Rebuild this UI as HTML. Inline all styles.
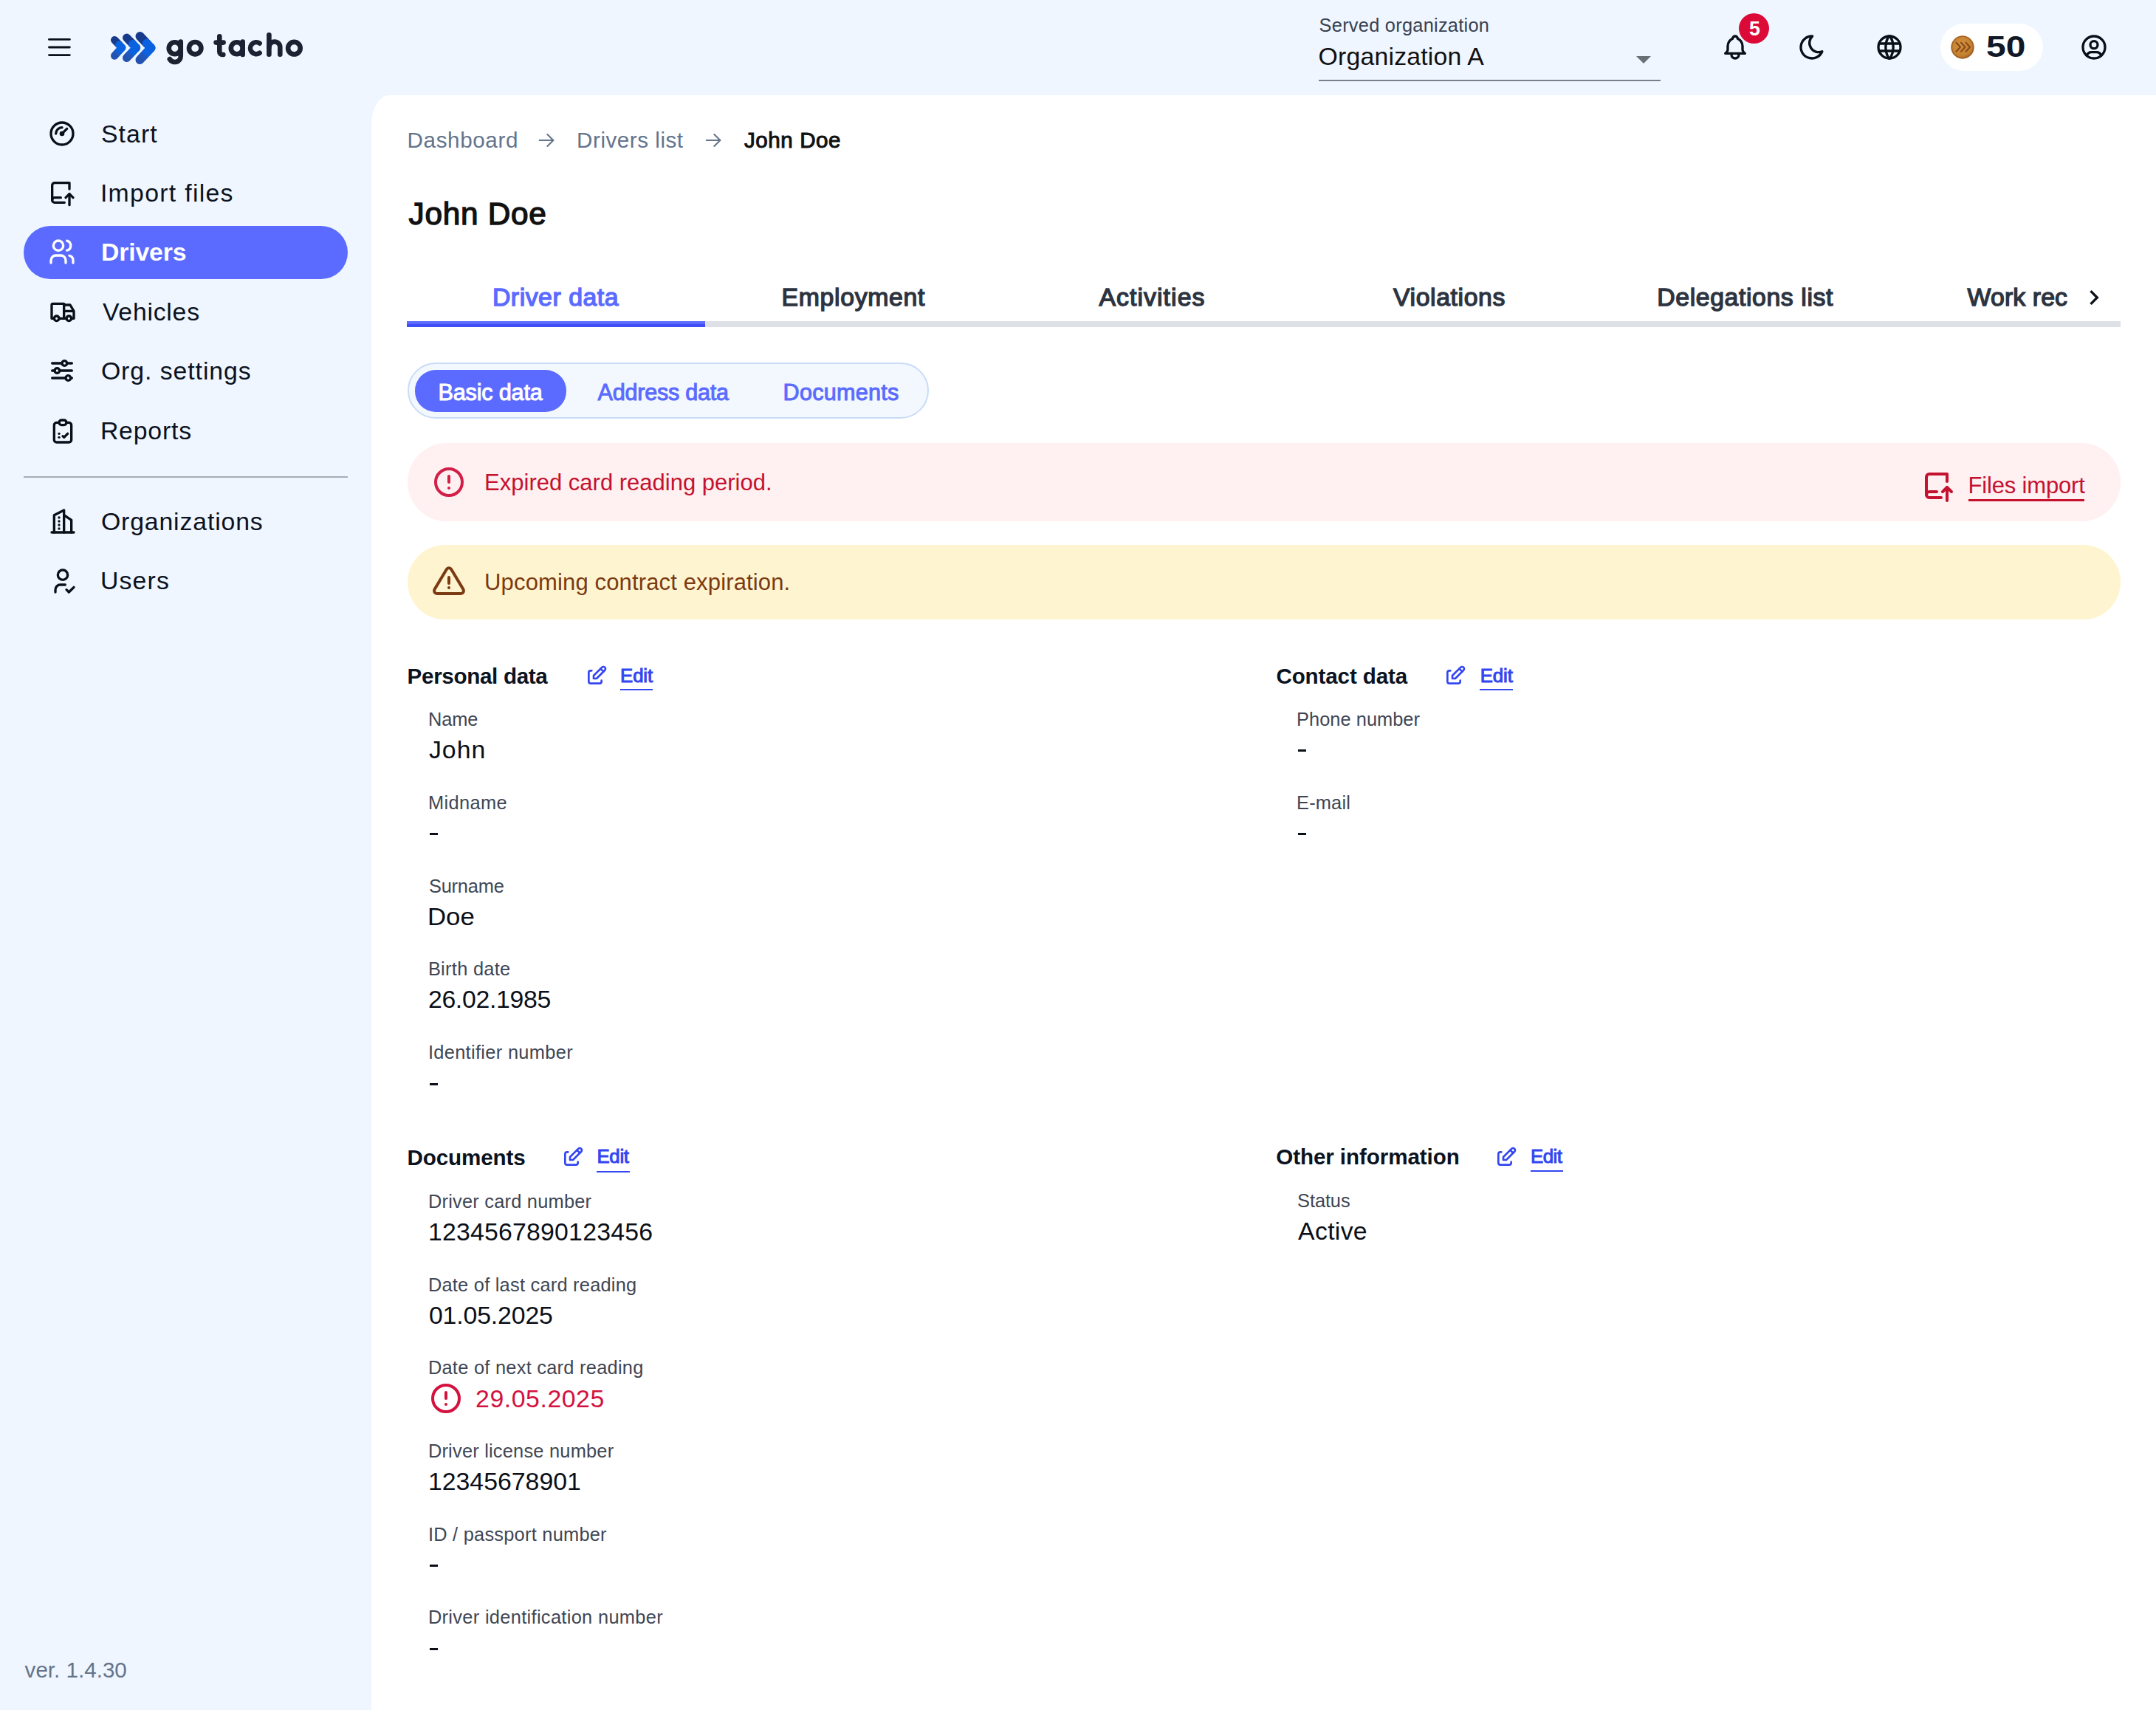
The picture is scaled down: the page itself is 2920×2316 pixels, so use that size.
<!DOCTYPE html>
<html lang="en">
<head>
<meta charset="utf-8">
<title>go tacho - John Doe</title>
<style>
html,body{margin:0;padding:0;}
body{width:2920px;height:2316px;overflow:hidden;position:relative;background:#eff6ff;font-family:"Liberation Sans",sans-serif;}
.t{position:absolute;white-space:nowrap;}
.abs{position:absolute;}
svg.ic{position:absolute;overflow:visible;}
svg.ic path, svg.ic circle{fill:none;stroke-linecap:round;stroke-linejoin:round;}
@media (-webkit-min-device-pixel-ratio:1.5) and (max-width:2000px){html{zoom:0.5;}}
</style>
</head>
<body>
<!-- main card -->
<div class="abs" style="left:503px;top:129px;width:2417px;height:2187px;background:#ffffff;border-top-left-radius:24px 40px;"></div>

<!-- header: hamburger -->
<svg class="ic" style="left:0;top:0" width="500" height="129" viewBox="0 0 500 129">
  <g stroke="#0b0f17" stroke-width="2.9" stroke-linecap="round" fill="none">
    <path d="M66.5 53.4H94.3"/><path d="M66.5 64H94.3"/><path d="M66.5 74.6H94.3"/>
  </g>
  <!-- chevrons -->
  <defs>
    <linearGradient id="lg0" gradientUnits="userSpaceOnUse" x1="165.2" y1="64.6" x2="155.2" y2="75.6"><stop offset="0" stop-color="#0b62e0"/><stop offset="0.45" stop-color="#0b62e0"/><stop offset="0.7" stop-color="#2256bb"/><stop offset="1" stop-color="#2353b0"/></linearGradient>
    <linearGradient id="lg1" gradientUnits="userSpaceOnUse" x1="184.6" y1="64.6" x2="171.6" y2="78.4"><stop offset="0" stop-color="#0b62e0"/><stop offset="0.45" stop-color="#0b62e0"/><stop offset="0.7" stop-color="#2256bb"/><stop offset="1" stop-color="#2353b0"/></linearGradient>
    <linearGradient id="lg2" gradientUnits="userSpaceOnUse" x1="204.5" y1="64.8" x2="189.5" y2="81.0"><stop offset="0" stop-color="#0b62e0"/><stop offset="0.45" stop-color="#0b62e0"/><stop offset="0.7" stop-color="#2256bb"/><stop offset="1" stop-color="#2353b0"/></linearGradient>
  </defs>
  <g fill="none" stroke-linecap="round" stroke-linejoin="round">
    <path d="M155.2 54.2L161.40 60.65" stroke="#163a8c" stroke-width="10.4"/>
    <path d="M165.2 64.6L155.2 75.6" stroke="url(#lg0)" stroke-width="10.4"/>
    <path d="M161.40 60.65L165.2 64.6" stroke="#0b62e0" stroke-width="10.4"/>
    <path d="M171.6 51.2L179.66 59.51" stroke="#163a8c" stroke-width="11.2"/>
    <path d="M184.6 64.6L171.6 78.4" stroke="url(#lg1)" stroke-width="11.2"/>
    <path d="M179.66 59.51L184.6 64.6" stroke="#0b62e0" stroke-width="11.2"/>
    <path d="M189.5 49.0L198.80 58.80" stroke="#163a8c" stroke-width="12.0"/>
    <path d="M204.5 64.8L189.5 81.0" stroke="url(#lg2)" stroke-width="12.0"/>
    <path d="M198.80 58.80L204.5 64.8" stroke="#0b62e0" stroke-width="12.0"/>
  </g>
  <!-- go tacho -->
  <g fill="none" stroke="#1b2231" stroke-width="6.6" stroke-linecap="round" stroke-linejoin="round">
    <circle cx="236.75" cy="65.2" r="8"/>
    <path d="M244.75 56.5V76A8 8 0 0 1 229.8 80"/>
    <circle cx="264.2" cy="65.2" r="8.2"/>
    <path d="M297.3 49.3V70A4 4 0 0 0 301.3 74H302.3"/>
    <path d="M292.6 57.6H302.6"/>
    <circle cx="320.8" cy="65.2" r="8"/>
    <path d="M328.7 56.5V74"/>
    <path d="M351.6 58.65A8 8 0 1 0 351.6 71.75"/>
    <path d="M364.4 47.3V73.8"/>
    <path d="M364.4 63.9A7.45 7.45 0 0 1 379.3 63.9V73.8"/>
    <circle cx="398.4" cy="65.2" r="8.3"/>
  </g>
</svg>

<!-- select -->
<div class="abs" style="left:1786px;top:108px;width:463px;height:2px;background:#7b7f86;"></div>
<svg class="ic" style="left:2201.5px;top:56px" width="48" height="48" viewBox="0 0 24 24"><path d="M7 10l5 5 5-5z" style="fill:#6b6f76;stroke:none"/></svg>

<!-- header icons -->
<svg class="ic" style="left:2330px;top:44px" width="40" height="40" viewBox="0 0 24 24" stroke="#0b0f17" stroke-width="2"><path d="M10 5a2 2 0 1 1 4 0a7 7 0 0 1 4 6v3a4 4 0 0 0 2 3h-16a4 4 0 0 0 2 -3v-3a7 7 0 0 1 4 -6"/><path d="M9 17v1a3 3 0 0 0 6 0v-1"/></svg>
<div class="abs" style="left:2354.8px;top:17.9px;width:41px;height:41px;border-radius:50%;background:#dc0a37;"></div>
<svg class="ic" style="left:2434px;top:44px" width="40" height="40" viewBox="0 0 24 24" stroke="#0b0f17" stroke-width="2"><path d="M12 3c.132 0 .263 0 .393 0a7.5 7.5 0 0 0 7.92 12.446a9 9 0 1 1 -8.313 -12.454z"/></svg>
<svg class="ic" style="left:2539px;top:44px" width="40" height="40" viewBox="0 0 24 24" stroke="#0b0f17" stroke-width="2"><path d="M3 12a9 9 0 1 0 18 0a9 9 0 0 0 -18 0"/><path d="M3.6 9h16.8"/><path d="M3.6 15h16.8"/><path d="M11.5 3a17 17 0 0 0 0 18"/><path d="M12.5 3a17 17 0 0 1 0 18"/></svg>
<div class="abs" style="left:2628px;top:32px;width:139px;height:64px;border-radius:32px;background:#ffffff;"></div>
<svg class="ic" style="left:2642px;top:47.5px" width="32" height="32" viewBox="0 0 32 32">
  <defs><radialGradient id="cg" cx="0.45" cy="0.4" r="0.65"><stop offset="0" stop-color="#d4923e"/><stop offset="0.7" stop-color="#c4822f"/><stop offset="1" stop-color="#9c5a22"/></radialGradient></defs>
  <circle cx="16" cy="16" r="15.7" style="fill:url(#cg);stroke:none"/><circle cx="16" cy="16" r="14.6" style="fill:none" stroke="#a0602a" stroke-width="1.4"/>
  <g style="fill:none" stroke="#8a4a1c" stroke-width="2.2" stroke-linecap="round">
    <path d="M7.5 9.7l5.5 6l-5.5 6"/><path d="M14 9.7l5.5 6l-5.5 6"/><path d="M20.5 9.7l5.5 6l-5.5 6"/>
  </g>
</svg>
<svg class="ic" style="left:2815.7px;top:44px" width="40" height="40" viewBox="0 0 24 24" stroke="#0b0f17" stroke-width="2"><path d="M12 12m-9 0a9 9 0 1 0 18 0a9 9 0 1 0 -18 0"/><path d="M12 10m-3 0a3 3 0 1 0 6 0a3 3 0 1 0 -6 0"/><path d="M6.168 18.849a4 4 0 0 1 3.832 -2.849h4a4 4 0 0 1 3.834 2.855"/></svg>

<!-- sidebar -->
<div class="abs" style="left:32px;top:306px;width:439px;height:72px;border-radius:36px;background:#5b6bff;"></div>
<div class="abs" style="left:32px;top:644.5px;width:439px;height:2px;background:#a9adb4;"></div>
<!-- nav icons (40px boxes) -->
<svg class="ic" style="left:64.2px;top:160.7px" width="40" height="40" viewBox="0 0 24 24" stroke="#0b0f17" stroke-width="2"><path d="M12 12m-9 0a9 9 0 1 0 18 0a9 9 0 1 0 -18 0"/><path d="M11 12a1 1 0 1 0 2 0a1 1 0 1 0 -2 0" style="fill:#0b0f17"/><path d="M13.41 10.59l2.59 -2.59"/><path d="M7 12a5 5 0 0 1 5 -5"/></svg>
<svg class="ic" style="left:64.2px;top:241px" width="40" height="40" viewBox="0 0 24 24" stroke="#0b0f17" stroke-width="2"><path d="M14 20h-8a2 2 0 0 1 -2 -2v-12a2 2 0 0 1 2 -2h12v5"/><path d="M11 16h-5a2 2 0 0 0 -2 2"/><path d="M15 16l3 -3l3 3"/><path d="M18 13v9"/></svg>
<svg class="ic" style="left:64.2px;top:321.3px" width="40" height="40" viewBox="0 0 24 24" stroke="#ffffff" stroke-width="2"><path d="M9 7m-4 0a4 4 0 1 0 8 0a4 4 0 1 0 -8 0"/><path d="M3 21v-2a4 4 0 0 1 4 -4h4a4 4 0 0 1 4 4v2"/><path d="M16 3.13a4 4 0 0 1 0 7.75"/><path d="M21 21v-2a4 4 0 0 0 -3 -3.85"/></svg>
<svg class="ic" style="left:64.7px;top:402.6px" width="40" height="40" viewBox="0 0 24 24" stroke="#0b0f17" stroke-width="2"><path d="M7 17m-2 0a2 2 0 1 0 4 0a2 2 0 1 0 -4 0"/><path d="M17 17m-2 0a2 2 0 1 0 4 0a2 2 0 1 0 -4 0"/><path d="M5 17h-2v-11a1 1 0 0 1 1 -1h9v12m-4 0h6m4 0h2v-6h-8m0 -5h5l3 5"/></svg>
<svg class="ic" style="left:64.2px;top:481.9px" width="40" height="40" viewBox="0 0 24 24" stroke="#0b0f17" stroke-width="2"><path d="M14 6m-2 0a2 2 0 1 0 4 0a2 2 0 1 0 -4 0"/><path d="M4 6l8 0"/><path d="M16 6l4 0"/><path d="M8 12m-2 0a2 2 0 1 0 4 0a2 2 0 1 0 -4 0"/><path d="M4 12l2 0"/><path d="M10 12l10 0"/><path d="M17 18m-2 0a2 2 0 1 0 4 0a2 2 0 1 0 -4 0"/><path d="M4 18l11 0"/><path d="M19 18l1 0"/></svg>
<svg class="ic" style="left:64.7px;top:563.7px" width="40" height="40" viewBox="0 0 24 24" stroke="#0b0f17" stroke-width="2"><path d="M9 5h-2a2 2 0 0 0 -2 2v12a2 2 0 0 0 2 2h10a2 2 0 0 0 2 -2v-12a2 2 0 0 0 -2 -2h-2"/><path d="M9 3m0 2a2 2 0 0 1 2 -2h2a2 2 0 0 1 2 2v0a2 2 0 0 1 -2 2h-2a2 2 0 0 1 -2 -2z"/><path d="M9 14h.01"/><path d="M9 17h.01"/><path d="M12 16l1 1l3 -3"/></svg>
<svg class="ic" style="left:64.8px;top:686.3px" width="40" height="40" viewBox="0 0 24 24" stroke="#0b0f17" stroke-width="2"><path d="M3 21l18 0"/><path d="M5 21v-14l8 -4v18"/><path d="M19 21v-10l-6 -4"/><path d="M9 9l0 .01"/><path d="M9 12l0 .01"/><path d="M9 15l0 .01"/><path d="M9 18l0 .01"/></svg>
<svg class="ic" style="left:64.5px;top:766.8px" width="40" height="40" viewBox="0 0 24 24" stroke="#0b0f17" stroke-width="2"><path d="M8 7a4 4 0 1 0 8 0a4 4 0 0 0 -8 0"/><path d="M6 21v-2a4 4 0 0 1 4 -4h4"/><path d="M15 19l2 2l4 -4"/></svg>

<!-- breadcrumb arrows -->
<svg class="ic" style="left:724.1px;top:173.7px" width="32" height="32" viewBox="0 0 24 24" stroke="#64748b" stroke-width="1.5"><path d="M5 12l14 0"/><path d="M13 18l6 -6"/><path d="M13 6l6 6"/></svg>
<svg class="ic" style="left:950.3px;top:173.7px" width="32" height="32" viewBox="0 0 24 24" stroke="#64748b" stroke-width="1.5"><path d="M5 12l14 0"/><path d="M13 18l6 -6"/><path d="M13 6l6 6"/></svg>

<!-- tabs -->
<div class="abs" style="left:551px;top:435px;width:2320.6px;height:8px;background:#dde1e6;"></div>
<div class="abs" style="left:551px;top:435px;width:404px;height:8px;background:linear-gradient(#5c6afd 0,#5c6afd 50%,#3d4ff5 50%,#3d4ff5 100%);"></div>
<svg class="ic" style="left:2815.7px;top:382.7px" width="40" height="40" viewBox="0 0 24 24"><path d="M8.59 16.59 13.17 12 8.59 7.41 10 6l6 6-6 6z" style="fill:#0b0f17;stroke:none"/></svg>

<!-- segmented control -->
<div class="abs" style="left:552px;top:491.3px;width:702px;height:72px;border:2px solid #c9dcf6;border-radius:38px;background:#f3f8fe;"></div>
<div class="abs" style="left:561.6px;top:501.3px;width:205.4px;height:56.5px;border-radius:28px;background:#5b6bff;"></div>

<!-- alerts -->
<div class="abs" style="left:551.75px;top:600px;width:2319.85px;height:106px;border-radius:53px;background:#fff0f1;"></div>
<svg class="ic" style="left:584px;top:629.25px" width="48" height="48" viewBox="0 0 24 24" stroke="#d21f47" stroke-width="2"><path d="M3 12a9 9 0 1 0 18 0a9 9 0 0 0 -18 0"/><path d="M12 8v4"/><path d="M12 16h.01"/></svg>
<svg class="ic" style="left:2601px;top:633.5px" width="48" height="48" viewBox="0 0 24 24" stroke="#c4122f" stroke-width="2"><path d="M14 20h-8a2 2 0 0 1 -2 -2v-12a2 2 0 0 1 2 -2h12v5"/><path d="M11 16h-5a2 2 0 0 0 -2 2"/><path d="M15 16l3 -3l3 3"/><path d="M18 13v9"/></svg>
<div class="abs" style="left:2665.7px;top:676px;width:157.7px;height:2.6px;background:#c4122f;"></div>
<div class="abs" style="left:551.75px;top:738px;width:2319.85px;height:101px;border-radius:50.5px;background:#fff4d0;"></div>
<svg class="ic" style="left:584px;top:763.7px" width="48" height="48" viewBox="0 0 24 24" stroke="#7a3a12" stroke-width="2"><path d="M12 9v4"/><path d="M10.363 3.591l-8.106 13.534a1.914 1.914 0 0 0 1.636 2.871h16.214a1.914 1.914 0 0 0 1.636 -2.87l-8.106 -13.536a1.914 1.914 0 0 0 -3.274 0z"/><path d="M12 16h.01"/></svg>

<!-- edit icons + underlines -->
<svg class="ic" style="left:791.5px;top:898.7px" width="32" height="32" viewBox="0 0 24 24" stroke="#3346f0" stroke-width="2"><path d="M7 7h-1a2 2 0 0 0 -2 2v9a2 2 0 0 0 2 2h9a2 2 0 0 0 2 -2v-1"/><path d="M20.385 6.585a2.1 2.1 0 0 0 -2.97 -2.97l-8.415 8.385v3h3l8.385 -8.415z"/><path d="M16 5l3 3"/></svg>
<div class="abs" style="left:839.7px;top:933px;width:44.6px;height:2.2px;background:#3346f0;"></div>
<svg class="ic" style="left:1955.4px;top:898.7px" width="32" height="32" viewBox="0 0 24 24" stroke="#3346f0" stroke-width="2"><path d="M7 7h-1a2 2 0 0 0 -2 2v9a2 2 0 0 0 2 2h9a2 2 0 0 0 2 -2v-1"/><path d="M20.385 6.585a2.1 2.1 0 0 0 -2.97 -2.97l-8.415 8.385v3h3l8.385 -8.415z"/><path d="M16 5l3 3"/></svg>
<div class="abs" style="left:2004px;top:933px;width:44.8px;height:2.2px;background:#3346f0;"></div>
<svg class="ic" style="left:759.7px;top:1550.7px" width="32" height="32" viewBox="0 0 24 24" stroke="#3346f0" stroke-width="2"><path d="M7 7h-1a2 2 0 0 0 -2 2v9a2 2 0 0 0 2 2h9a2 2 0 0 0 2 -2v-1"/><path d="M20.385 6.585a2.1 2.1 0 0 0 -2.97 -2.97l-8.415 8.385v3h3l8.385 -8.415z"/><path d="M16 5l3 3"/></svg>
<div class="abs" style="left:808.2px;top:1585.8px;width:44.6px;height:2.2px;background:#3346f0;"></div>
<svg class="ic" style="left:2023.6px;top:1550.7px" width="32" height="32" viewBox="0 0 24 24" stroke="#3346f0" stroke-width="2"><path d="M7 7h-1a2 2 0 0 0 -2 2v9a2 2 0 0 0 2 2h9a2 2 0 0 0 2 -2v-1"/><path d="M20.385 6.585a2.1 2.1 0 0 0 -2.97 -2.97l-8.415 8.385v3h3l8.385 -8.415z"/><path d="M16 5l3 3"/></svg>
<div class="abs" style="left:2072.5px;top:1585.3px;width:44.8px;height:2.2px;background:#3346f0;"></div>

<!-- next card reading icon -->
<svg class="ic" style="left:579.9px;top:1870.4px" width="48" height="48" viewBox="0 0 24 24" stroke="#d3123f" stroke-width="2"><path d="M3 12a9 9 0 1 0 18 0a9 9 0 0 0 -18 0"/><path d="M12 8v4"/><path d="M12 16h.01"/></svg>

<div class="t" style="left:1786.60px;top:21.79px;font-size:25.4px;line-height:25.4px;color:#374151;letter-spacing:0.250px;">Served organization</div>
<div class="t" style="left:1785.60px;top:59.67px;font-size:33.8px;line-height:33.8px;color:#111111;letter-spacing:0.192px;">Organization A</div>
<div class="t" style="left:2368.90px;top:24.68px;font-size:27.3px;line-height:27.3px;color:#ffffff;font-weight:700;transform:scaleX(0.9829);transform-origin:0 0;">5</div>
<div class="t" style="left:2689.60px;top:43.23px;font-size:41.4px;line-height:41.4px;color:#111827;font-weight:700;transform:scaleX(1.1596);transform-origin:0 0;">50</div>
<div class="t" style="left:136.90px;top:164.67px;font-size:33.8px;line-height:33.8px;color:#0b1220;letter-spacing:1.100px;">Start</div>
<div class="t" style="left:135.90px;top:244.67px;font-size:33.8px;line-height:33.8px;color:#0b1220;letter-spacing:1.305px;">Import files</div>
<div class="t" style="left:136.90px;top:324.97px;font-size:33.8px;line-height:33.8px;color:#ffffff;font-weight:700;letter-spacing:-0.150px;">Drivers</div>
<div class="t" style="left:138.90px;top:405.67px;font-size:33.8px;line-height:33.8px;color:#0b1220;letter-spacing:0.757px;">Vehicles</div>
<div class="t" style="left:136.90px;top:486.17px;font-size:33.8px;line-height:33.8px;color:#0b1220;letter-spacing:0.933px;">Org. settings</div>
<div class="t" style="left:135.90px;top:566.67px;font-size:33.8px;line-height:33.8px;color:#0b1220;letter-spacing:0.800px;">Reports</div>
<div class="t" style="left:136.90px;top:689.67px;font-size:33.8px;line-height:33.8px;color:#0b1220;letter-spacing:0.858px;">Organizations</div>
<div class="t" style="left:135.90px;top:769.67px;font-size:33.8px;line-height:33.8px;color:#0b1220;letter-spacing:1.175px;">Users</div>
<div class="t" style="left:33.60px;top:2247.23px;font-size:29.6px;line-height:29.6px;color:#64748b;">ver. 1.4.30</div>
<div class="t" style="left:551.60px;top:175.13px;font-size:29.6px;line-height:29.6px;color:#64748b;letter-spacing:0.625px;">Dashboard</div>
<div class="t" style="left:781.10px;top:175.13px;font-size:29.6px;line-height:29.6px;color:#64748b;letter-spacing:0.536px;">Drivers list</div>
<div class="t" style="left:1007.90px;top:175.13px;font-size:29.6px;line-height:29.6px;color:#111111;-webkit-text-stroke:1px #111111;letter-spacing:0.571px;">John Doe</div>
<div class="t" style="left:553.60px;top:268.77px;font-size:42.3px;line-height:42.3px;color:#111111;-webkit-text-stroke:1.4px #111111;letter-spacing:0.714px;">John Doe</div>
<div class="t" style="left:666.90px;top:386.17px;font-size:33.8px;line-height:33.8px;color:#5b6bff;-webkit-text-stroke:1.4px #5b6bff;letter-spacing:0.540px;">Driver data</div>
<div class="t" style="left:1058.60px;top:386.17px;font-size:33.8px;line-height:33.8px;color:#2d3440;-webkit-text-stroke:1.4px #2d3440;letter-spacing:0.667px;">Employment</div>
<div class="t" style="left:1488.40px;top:386.17px;font-size:33.8px;line-height:33.8px;color:#2d3440;-webkit-text-stroke:1.4px #2d3440;letter-spacing:1.078px;">Activities</div>
<div class="t" style="left:1887.00px;top:386.17px;font-size:33.8px;line-height:33.8px;color:#2d3440;-webkit-text-stroke:1.4px #2d3440;letter-spacing:0.611px;">Violations</div>
<div class="t" style="left:2244.30px;top:386.17px;font-size:33.8px;line-height:33.8px;color:#2d3440;-webkit-text-stroke:1.4px #2d3440;letter-spacing:0.593px;">Delegations list</div>
<div class="t" style="left:2664.60px;top:386.37px;font-size:33.8px;line-height:33.8px;color:#2d3440;-webkit-text-stroke:1.4px #2d3440;letter-spacing:0.114px;">Work rec</div>
<div class="t" style="left:593.50px;top:515.58px;font-size:30.6px;line-height:30.6px;color:#ffffff;-webkit-text-stroke:1px #ffffff;letter-spacing:-0.178px;">Basic data</div>
<div class="t" style="left:809.60px;top:515.58px;font-size:30.6px;line-height:30.6px;color:#5b6bff;-webkit-text-stroke:1px #5b6bff;letter-spacing:-0.255px;">Address data</div>
<div class="t" style="left:1060.60px;top:515.58px;font-size:30.6px;line-height:30.6px;color:#5b6bff;-webkit-text-stroke:1px #5b6bff;letter-spacing:0.250px;">Documents</div>
<div class="t" style="left:656.10px;top:638.29px;font-size:31.0px;line-height:31.0px;color:#c4122f;">Expired card reading period.</div>
<div class="t" style="left:2665.60px;top:641.54px;font-size:31.0px;line-height:31.0px;color:#c4122f;letter-spacing:-0.182px;">Files import</div>
<div class="t" style="left:656.10px;top:772.79px;font-size:31.0px;line-height:31.0px;color:#7a3a12;letter-spacing:0.143px;">Upcoming contract expiration.</div>
<div class="t" style="left:551.60px;top:900.73px;font-size:29.6px;line-height:29.6px;color:#0b1220;font-weight:700;letter-spacing:-0.325px;">Personal data</div>
<div class="t" style="left:1728.40px;top:900.73px;font-size:29.6px;line-height:29.6px;color:#0b1220;font-weight:700;letter-spacing:-0.127px;">Contact data</div>
<div class="t" style="left:551.60px;top:1552.53px;font-size:29.6px;line-height:29.6px;color:#0b1220;font-weight:700;letter-spacing:-0.138px;">Documents</div>
<div class="t" style="left:1728.20px;top:1552.43px;font-size:29.6px;line-height:29.6px;color:#0b1220;font-weight:700;letter-spacing:-0.081px;">Other information</div>
<div class="t" style="left:840.10px;top:902.65px;font-size:25.8px;line-height:25.8px;color:#3346f0;-webkit-text-stroke:1px #3346f0;letter-spacing:-0.167px;">Edit</div>
<div class="t" style="left:2004.80px;top:902.65px;font-size:25.8px;line-height:25.8px;color:#3346f0;-webkit-text-stroke:1px #3346f0;letter-spacing:-0.133px;">Edit</div>
<div class="t" style="left:808.40px;top:1554.45px;font-size:25.8px;line-height:25.8px;color:#3346f0;-webkit-text-stroke:1px #3346f0;letter-spacing:-0.267px;">Edit</div>
<div class="t" style="left:2073.10px;top:1554.45px;font-size:25.8px;line-height:25.8px;color:#3346f0;-webkit-text-stroke:1px #3346f0;letter-spacing:-0.533px;">Edit</div>
<div class="t" style="left:579.90px;top:962.29px;font-size:25.4px;line-height:25.4px;color:#3f4653;letter-spacing:-0.067px;">Name</div>
<div class="t" style="left:580.90px;top:998.87px;font-size:33.8px;line-height:33.8px;color:#0b0f17;letter-spacing:1.067px;">John</div>
<div class="t" style="left:579.90px;top:1075.29px;font-size:25.4px;line-height:25.4px;color:#3f4653;letter-spacing:0.367px;">Midname</div>
<div class="t" style="left:580.90px;top:1188.09px;font-size:25.4px;line-height:25.4px;color:#3f4653;letter-spacing:-0.183px;">Surname</div>
<div class="t" style="left:578.90px;top:1224.67px;font-size:33.8px;line-height:33.8px;color:#0b0f17;transform:scaleX(1.0293);transform-origin:0 0;">Doe</div>
<div class="t" style="left:579.90px;top:1300.19px;font-size:25.4px;line-height:25.4px;color:#3f4653;letter-spacing:0.289px;">Birth date</div>
<div class="t" style="left:579.90px;top:1336.77px;font-size:33.8px;line-height:33.8px;color:#0b0f17;letter-spacing:-0.311px;">26.02.1985</div>
<div class="t" style="left:579.90px;top:1413.19px;font-size:25.4px;line-height:25.4px;color:#3f4653;letter-spacing:0.325px;">Identifier number</div>
<div class="t" style="left:579.90px;top:1615.19px;font-size:25.4px;line-height:25.4px;color:#3f4653;letter-spacing:0.229px;">Driver card number</div>
<div class="t" style="left:579.90px;top:1651.67px;font-size:33.8px;line-height:33.8px;color:#0b0f17;letter-spacing:0.227px;">1234567890123456</div>
<div class="t" style="left:579.90px;top:1727.69px;font-size:25.4px;line-height:25.4px;color:#3f4653;letter-spacing:0.238px;">Date of last card reading</div>
<div class="t" style="left:580.90px;top:1765.07px;font-size:33.8px;line-height:33.8px;color:#0b0f17;letter-spacing:-0.133px;">01.05.2025</div>
<div class="t" style="left:579.90px;top:1840.29px;font-size:25.4px;line-height:25.4px;color:#3f4653;letter-spacing:0.263px;">Date of next card reading</div>
<div class="t" style="left:644.10px;top:1877.57px;font-size:33.8px;line-height:33.8px;color:#d3123f;letter-spacing:0.556px;">29.05.2025</div>
<div class="t" style="left:579.90px;top:1953.19px;font-size:25.4px;line-height:25.4px;color:#3f4653;letter-spacing:0.215px;">Driver license number</div>
<div class="t" style="left:579.90px;top:1989.67px;font-size:33.8px;line-height:33.8px;color:#0b0f17;letter-spacing:0.020px;">12345678901</div>
<div class="t" style="left:579.90px;top:2065.69px;font-size:25.4px;line-height:25.4px;color:#3f4653;letter-spacing:0.242px;">ID / passport number</div>
<div class="t" style="left:579.90px;top:2178.29px;font-size:25.4px;line-height:25.4px;color:#3f4653;letter-spacing:0.322px;">Driver identification number</div>
<div class="t" style="left:1756.10px;top:962.19px;font-size:25.4px;line-height:25.4px;color:#3f4653;letter-spacing:0.027px;">Phone number</div>
<div class="t" style="left:1756.10px;top:1074.99px;font-size:25.4px;line-height:25.4px;color:#3f4653;letter-spacing:0.160px;">E-mail</div>
<div class="t" style="left:1757.10px;top:1614.49px;font-size:25.4px;line-height:25.4px;color:#3f4653;letter-spacing:-0.100px;">Status</div>
<div class="t" style="left:1758.10px;top:1651.37px;font-size:33.8px;line-height:33.8px;color:#0b0f17;letter-spacing:0.300px;">Active</div>
<div style="position:absolute;left:581.7px;top:1128.25px;width:11.3px;height:2.9px;background:#0b0f17"></div>
<div style="position:absolute;left:581.7px;top:1466.65px;width:11.3px;height:2.9px;background:#0b0f17"></div>
<div style="position:absolute;left:581.7px;top:2119.20px;width:11.3px;height:2.9px;background:#0b0f17"></div>
<div style="position:absolute;left:581.7px;top:2231.95px;width:11.3px;height:2.9px;background:#0b0f17"></div>
<div style="position:absolute;left:1758.0px;top:1015.25px;width:11.3px;height:2.9px;background:#0b0f17"></div>
<div style="position:absolute;left:1758.0px;top:1128.45px;width:11.3px;height:2.9px;background:#0b0f17"></div>
</body>
</html>
